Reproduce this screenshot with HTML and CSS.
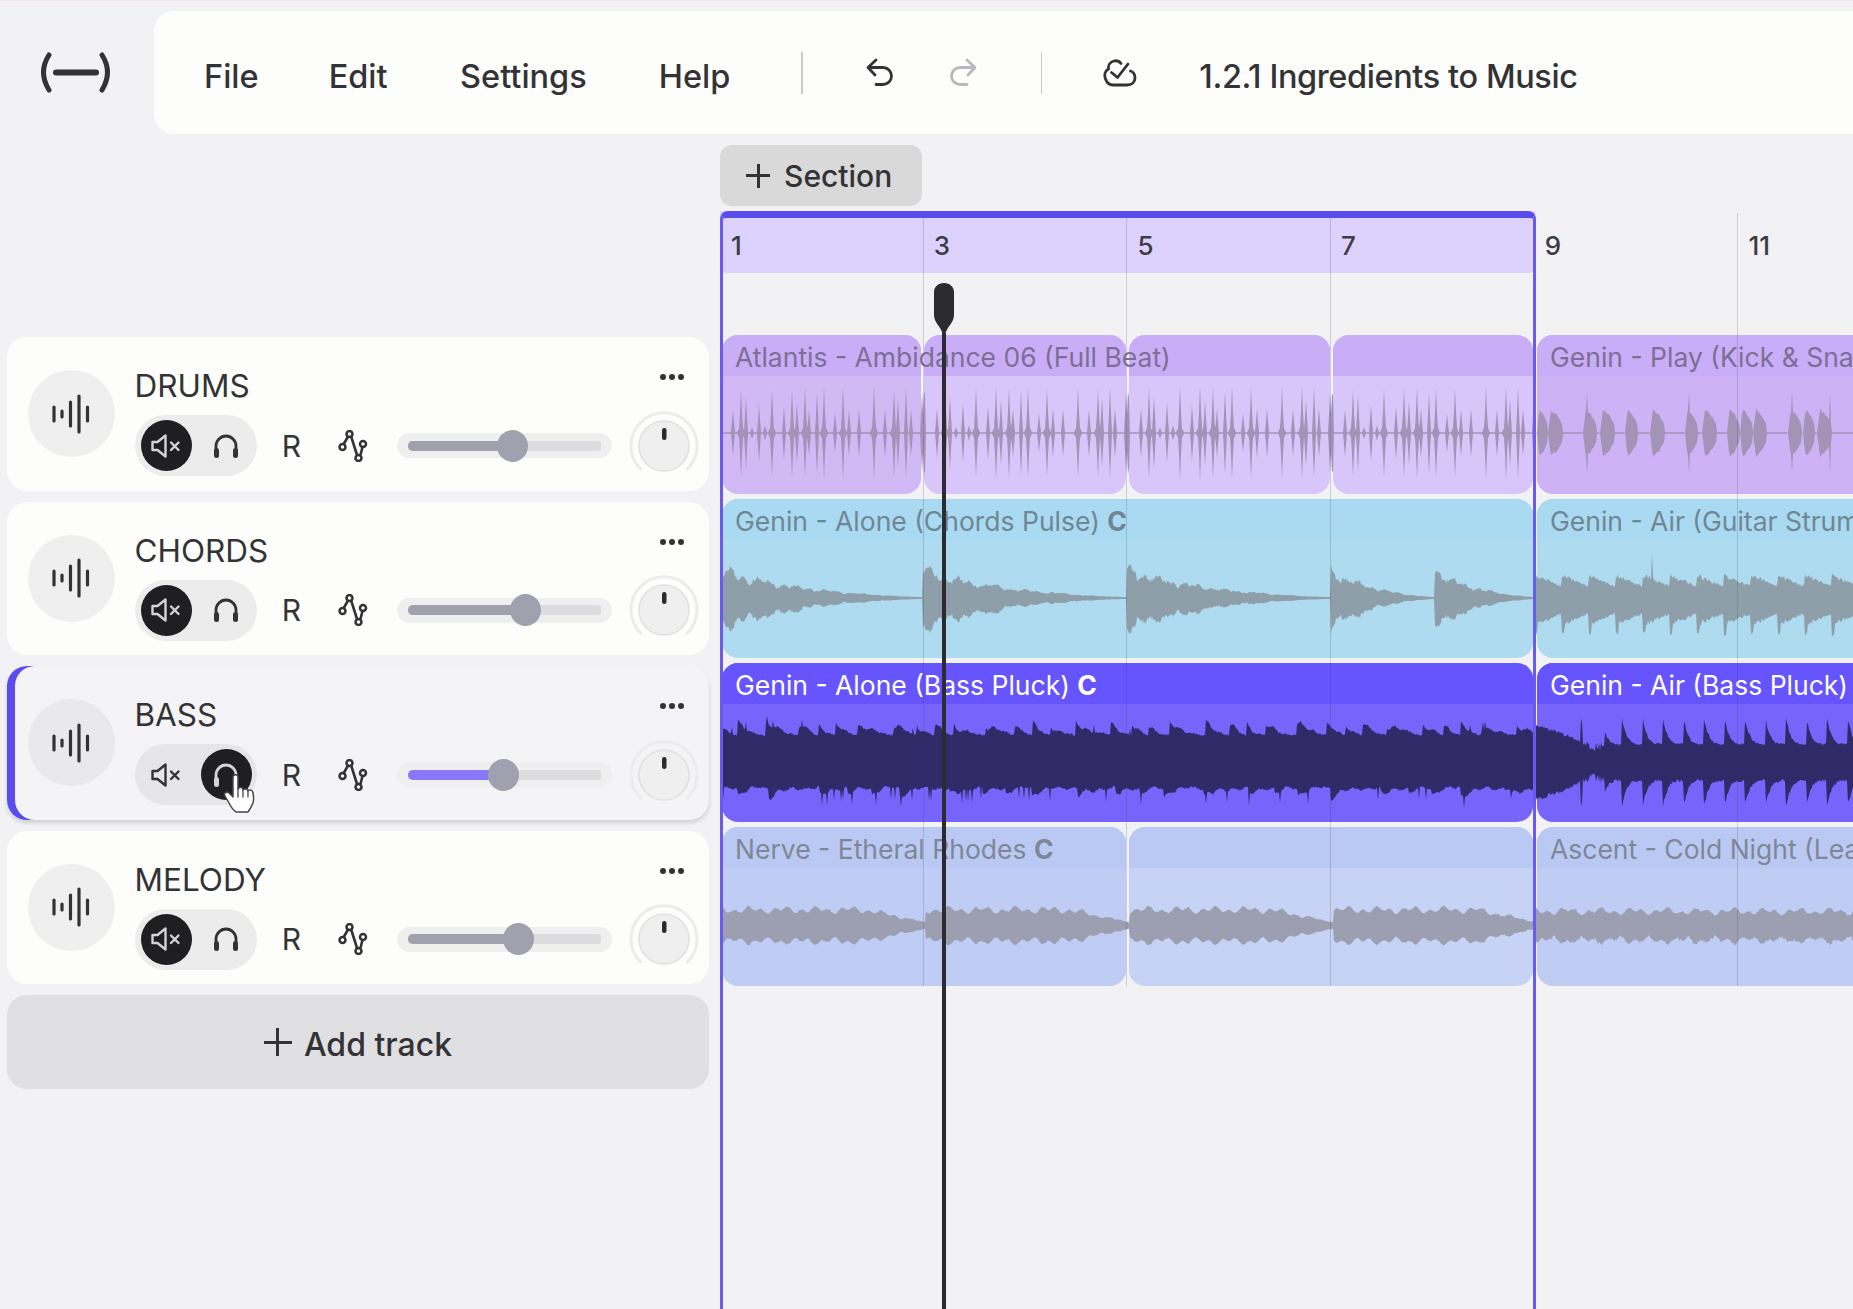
FILE: index.html
```html
<!DOCTYPE html>
<html lang="en">
<head>
    <meta charset="UTF-8">
    <meta name="viewport" content="width=device-width, initial-scale=1.0">
    <title>1.2.1 Ingredients to Music</title>
    <link rel="stylesheet" href="styles.css">
</head>
<body>
    <!-- shared icons -->
    <svg class="sprite" width="0" height="0">
        <symbol id="i-bars" viewBox="0 0 44 40">
            <path d="M5 13v14M13 17v6M21.500 8v24M30 2v36M38.500 13v14" fill="none" stroke="currentColor" stroke-width="3.200" stroke-linecap="round"/>
        </symbol>
        <symbol id="i-mute" viewBox="0 0 32 26">
            <path d="M2.500 9h5l8-6.500v21l-8-6.500h-5z" fill="none" stroke="currentColor" stroke-width="2.400" stroke-linejoin="round"/>
            <path d="M21 9.500l7.500 7.500M28.500 9.500l-7.500 7.500" fill="none" stroke="currentColor" stroke-width="2.400" stroke-linecap="round"/>
        </symbol>
        <symbol id="i-phones" viewBox="0 0 30 26">
            <path d="M5 18v-5a10 10 0 0 1 20 0v5" fill="none" stroke="currentColor" stroke-width="2.800"/>
            <rect x="3" y="15" width="5" height="10" rx="2.500" fill="currentColor"/>
            <rect x="22" y="15" width="5" height="10" rx="2.500" fill="currentColor"/>
        </symbol>
        <symbol id="i-auto" viewBox="0 0 30 32">
            <path d="M5.500 14.500l4.500-8M13 6l6 19M22.500 25l2-8" fill="none" stroke="currentColor" stroke-width="2.600"/>
            <g fill="none" stroke="currentColor" stroke-width="2.500">
                <circle cx="11.500" cy="4" r="3"/>
                <circle cx="4.500" cy="17" r="3"/>
                <circle cx="20.500" cy="28" r="3"/>
                <circle cx="25" cy="14" r="3"/>
            </g>
        </symbol>
        <symbol id="i-knob" viewBox="0 0 70 70">
            <path d="M12.500 59A33 33 0 1 1 57.500 59" fill="none" stroke="#ececec" stroke-width="3"/>
            <circle cx="35" cy="35" r="25" fill="#efefef" stroke="#e0e0e0" stroke-width="1.500"/>
            <rect x="33" y="17" width="4.500" height="12" rx="2.200" fill="#2b2b2e"/>
        </symbol>
    </svg>

    <header class="topbar">
        <div class="logo">
            <svg width="73" height="41" viewBox="0 0 73 41">
                <path d="M10 3Q-1 20 10 38M63 3Q74 20 63 38" fill="none" stroke="#333336" stroke-width="5" stroke-linecap="round"/>
                <path d="M17 20.500H57" fill="none" stroke="#333336" stroke-width="6" stroke-linecap="round"/>
            </svg>
        </div>
        <nav class="menu">
            <a class="menu-item item-file">File</a>
            <a class="menu-item item-edit">Edit</a>
            <a class="menu-item item-settings">Settings</a>
            <a class="menu-item item-help">Help</a>
            <span class="divider divider-a"></span>
            <svg class="undo" width="30" height="30" viewBox="0 0 30 30">
                <path d="M10 2L2 9.500 9 17M3 9.500H17a8.500 8.500 0 0 1 0 17H10" fill="none" stroke="#333336" stroke-width="2.800" stroke-linecap="round" stroke-linejoin="round"/>
            </svg>
            <svg class="redo" width="30" height="30" viewBox="0 0 30 30">
                <path d="M20 2L28 9.500 21 17M27 9.500H13a8.500 8.500 0 0 0 0 17H20" fill="none" stroke="#b9b9bb" stroke-width="2.800" stroke-linecap="round" stroke-linejoin="round"/>
            </svg>
            <span class="divider divider-b"></span>
            <svg class="saved" width="34" height="28" viewBox="0 0 34 28">
                <path d="M18 4.500C16 2 13 1.500 11 2 7 3 5 6.500 5.500 10 2 12 1 16 2.500 20 4 24 7 26 10 26H24C29 26 32 23 32 19 32 16 30.500 13 27.500 12" fill="none" stroke="#333336" stroke-width="2.800" stroke-linecap="round" stroke-linejoin="round"/>
                <path d="M8.500 13.500L14.500 18.500 25 5" fill="none" stroke="#333336" stroke-width="2.800" stroke-linecap="round" stroke-linejoin="round"/>
            </svg>
            <span class="menu-item song-title">1.2.1 Ingredients to Music</span>
        </nav>
    </header>

    <main class="main">
        <section class="tracks">
            <div class="track">
                <div class="track-icon"><svg width="44" height="40"><use href="#i-bars"/></svg></div>
                <div class="track-body">
                    <div class="track-head"><span class="track-name">DRUMS</span><span class="dots"><i></i><i></i><i></i></span></div>
                    <div class="controls">
                        <div class="toggle">
                            <span class="toggle-btn on"><svg width="32" height="26"><use href="#i-mute"/></svg></span>
                            <span class="toggle-btn"><svg width="30" height="26"><use href="#i-phones"/></svg></span>
                        </div>
                        <span class="rec">R</span>
                        <svg class="auto" width="30" height="32"><use href="#i-auto"/></svg>
                        <div class="slider"><div class="slider-track"><div class="slider-fill" style="width: 105px"></div></div></div>
                        <svg class="knob" width="70" height="70"><use href="#i-knob"/></svg>
                    </div>
                </div>
            </div>

            <div class="track">
                <div class="track-icon"><svg width="44" height="40"><use href="#i-bars"/></svg></div>
                <div class="track-body">
                    <div class="track-head"><span class="track-name">CHORDS</span><span class="dots"><i></i><i></i><i></i></span></div>
                    <div class="controls">
                        <div class="toggle">
                            <span class="toggle-btn on"><svg width="32" height="26"><use href="#i-mute"/></svg></span>
                            <span class="toggle-btn"><svg width="30" height="26"><use href="#i-phones"/></svg></span>
                        </div>
                        <span class="rec">R</span>
                        <svg class="auto" width="30" height="32"><use href="#i-auto"/></svg>
                        <div class="slider"><div class="slider-track"><div class="slider-fill" style="width: 118px"></div></div></div>
                        <svg class="knob" width="70" height="70"><use href="#i-knob"/></svg>
                    </div>
                </div>
            </div>

            <div class="track track-active">
                <div class="track-icon"><svg width="44" height="40"><use href="#i-bars"/></svg></div>
                <div class="track-body">
                    <div class="track-head"><span class="track-name">BASS</span><span class="dots"><i></i><i></i><i></i></span></div>
                    <div class="controls">
                        <div class="toggle">
                            <span class="toggle-btn"><svg width="32" height="26"><use href="#i-mute"/></svg></span>
                            <span class="toggle-btn on"><svg width="30" height="26"><use href="#i-phones"/></svg></span>
                            <!-- mouse pointer -->
                            <svg class="pointer" width="34" height="40" viewBox="0 0 34 40">
                                <path d="M10 3c0-3 5-3 5 0v12c1-2 5-2 5 1 1-2 5-1 5 1 1-2 5-1 5 2 1 5 1 9-1 12-1 3-3 5-4 7H13c-3-2-5-5-7-9l-4-7c-2-3 2-5 4-3l4 4z" fill="#fff" stroke="#46464a" stroke-width="1.500" stroke-linejoin="round"/>
                                <path d="M15 15v8M20 16v7M25 17v6" fill="none" stroke="#46464a" stroke-width="1.300" stroke-linecap="round"/>
                            </svg>
                        </div>
                        <span class="rec">R</span>
                        <svg class="auto" width="30" height="32"><use href="#i-auto"/></svg>
                        <div class="slider"><div class="slider-track"><div class="slider-fill fill-active" style="width: 96px"></div></div></div>
                        <svg class="knob" width="70" height="70"><use href="#i-knob"/></svg>
                    </div>
                </div>
            </div>

            <div class="track">
                <div class="track-icon"><svg width="44" height="40"><use href="#i-bars"/></svg></div>
                <div class="track-body">
                    <div class="track-head"><span class="track-name">MELODY</span><span class="dots"><i></i><i></i><i></i></span></div>
                    <div class="controls">
                        <div class="toggle">
                            <span class="toggle-btn on"><svg width="32" height="26"><use href="#i-mute"/></svg></span>
                            <span class="toggle-btn"><svg width="30" height="26"><use href="#i-phones"/></svg></span>
                        </div>
                        <span class="rec">R</span>
                        <svg class="auto" width="30" height="32"><use href="#i-auto"/></svg>
                        <div class="slider"><div class="slider-track"><div class="slider-fill" style="width: 111px"></div></div></div>
                        <svg class="knob" width="70" height="70"><use href="#i-knob"/></svg>
                    </div>
                </div>
            </div>

            <button class="add-track"><span class="plus plus-big"></span>Add track</button>
        </section>

        <section class="timeline">
            <button class="add-section"><span class="plus"></span>Section</button>

            <div class="arrange">
                <div class="ruler"></div>

                <div class="lanes">
                    <div class="lane lane-drums">
                        <div class="clip clip-a seam" style="width: 199px"><div class="clip-head">Atlantis - Ambidance 06 (Full Beat)</div></div>
                        <div class="clip" style="width: 202px"><div class="clip-head"></div></div>
                        <div class="clip" style="width: 201px"><div class="clip-head"></div></div>
                        <div class="clip" style="width: 200px"><div class="clip-head"></div></div>
                        <div class="clip clip-out" style="width: 400px"><div class="clip-head">Genin - Play (Kick &amp; Snare)</div></div>
                        <svg class="wave" data-kind="drums"></svg>
                    </div>
                    <div class="lane lane-chords">
                        <div class="clip" style="width: 811px"><div class="clip-head">Genin - Alone (Chords Pulse) <b>C</b></div></div>
                        <div class="clip" style="width: 400px"><div class="clip-head">Genin - Air (Guitar Strum)</div></div>
                        <svg class="wave" data-kind="chords"></svg>
                    </div>
                    <div class="lane lane-bass">
                        <div class="clip" style="width: 811px"><div class="clip-head">Genin - Alone (Bass Pluck) <b>C</b></div></div>
                        <div class="clip" style="width: 400px"><div class="clip-head">Genin - Air (Bass Pluck) <b>C</b></div></div>
                        <svg class="wave" data-kind="bass"></svg>
                    </div>
                    <div class="lane lane-melody">
                        <div class="clip clip-a" style="width: 404px"><div class="clip-head">Nerve - Etheral Rhodes <b>C</b></div></div>
                        <div class="clip seam-left" style="width: 404px"><div class="clip-head"></div></div>
                        <div class="clip clip-out" style="width: 400px"><div class="clip-head">Ascent - Cold Night (Lead)</div></div>
                        <svg class="wave" data-kind="melody"></svg>
                    </div>
                </div>

                <!-- overlays: bar lines, loop range, playhead -->
                <div class="beats">
                    <span class="beat">1</span>
                    <span class="beat">3</span>
                    <span class="beat">5</span>
                    <span class="beat">7</span>
                    <span class="beat">9</span>
                    <span class="beat">11</span>
                </div>
                <div class="loop"></div>
                <div class="playhead">
                    <svg width="22" height="52" viewBox="0 0 22 52">
                        <path d="M11 0C17 0 21 4 21 9V32C21 40 14 43 12 52H10C8 43 1 40 1 32V9C1 4 5 0 11 0Z" fill="#2b2b30"/>
                    </svg>
                </div>
            </div>
        </section>
    </main>

    <script src="waves.js"></script>
</body>
</html>
```

FILE: styles.css
```css
* {
    margin: 0;
    padding: 0;
    box-sizing: border-box;
}

body {
    height: 1309px;
    overflow: hidden;
    background: #f2f2f5;
    border-top: 1px solid #f3e6ea;
    color: #333336;
    font-family: Inter, "Liberation Sans", sans-serif;
}

.sprite {
    position: absolute;
}

/* top bar */
.topbar {
    display: flex;
    height: 133px;
    padding-top: 10px;
}
.logo {
    width: 154px;
    flex: none;
    padding: 41px 0 0 39px;
}
.menu {
    flex: 1;
    height: 123px;
    display: flex;
    align-items: center;
    background: #fdfdfc;
    border-radius: 20px 0 0 20px;
    font-size: 32.500px;
    font-weight: 500;
    white-space: nowrap;
}
.menu-item {
    flex: none;
    padding-top: 7px;
}
.item-file { margin-left: 50px; }
.item-edit { margin-left: 70px; }
.item-settings { margin-left: 72.500px; }
.item-help { margin-left: 72px; }
.divider {
    width: 1.500px;
    height: 42px;
    background: #c9c9cb;
}
.divider-a { margin-left: 71px; }
.undo { margin-left: 63px; }
.redo { margin-left: 51px; }
.divider-b { margin-left: 64px; }
.saved { margin-left: 61px; }
.song-title { margin-left: 62px; letter-spacing: -0.4px; }

/* main area */
.main {
    display: flex;
    padding: 11px 0 0 7px;
}

/* track list */
.tracks {
    width: 702px;
    flex: none;
    padding-top: 192px;
    display: flex;
    flex-direction: column;
    gap: 11px;
}
.track {
    height: 153.500px;
    display: flex;
    align-items: center;
    gap: 20px;
    padding-left: 20.500px;
    background: #fdfdfc;
    border-radius: 20px;
}
.track-active {
    background: #f4f4f7;
    box-shadow: inset 8px 0 0 #5b4cf0, 0 3px 4px rgba(0,0,0,0.14);
}
.track-icon {
    width: 87px;
    height: 87px;
    flex: none;
    display: flex;
    align-items: center;
    justify-content: center;
    background: #efefef;
    border-radius: 50%;
    color: #333336;
}
.track-active .track-icon {
    background: #e9e9eb;
}
.track-body {
    height: 100%;
    padding-top: 31px;
}
.track-head {
    width: 549px;
    height: 36px;
    margin-bottom: 11px;
    display: flex;
    justify-content: space-between;
}
.track-name {
    font-size: 31.500px;
    line-height: 36px;
}
.dots {
    display: flex;
    gap: 3px;
    margin-top: 6px;
}
.dots i {
    width: 6px;
    height: 6px;
    border-radius: 50%;
    background: #333336;
}

/* track controls */
.controls {
    display: flex;
    align-items: center;
    height: 61px;
}
.toggle {
    position: relative;
    width: 122px;
    height: 61px;
    flex: none;
    display: flex;
    align-items: center;
    gap: 9px;
    padding-left: 6px;
    background: #ececec;
    border-radius: 31px;
}
.track-active .toggle {
    background: #e6e6e8;
}
.toggle-btn {
    width: 51px;
    height: 51px;
    display: flex;
    align-items: center;
    justify-content: center;
    border-radius: 50%;
    color: #333336;
}
.toggle-btn.on {
    background: #1f1f22;
    color: #d4d4d6;
}
.pointer {
    position: absolute;
    left: 88px;
    top: 30px;
}
.rec {
    width: 22px;
    margin-left: 24px;
    font-size: 30px;
    text-align: center;
}
.auto {
    margin-left: 35px;
    flex: none;
    color: #333336;
}
.slider {
    width: 215px;
    height: 25px;
    margin-left: 29px;
    padding: 7.500px 11px;
    flex: none;
    background: #efefef;
    border-radius: 13px;
}
.slider-track {
    height: 10px;
    background: #dcdcdf;
    border-radius: 3px;
}
.slider-fill {
    position: relative;
    height: 10px;
    background: #a0a0ae;
    border-radius: 5px 0 0 5px;
}
.slider-fill::after {
    content: "";
    position: absolute;
    right: -15px;
    top: -11px;
    width: 31px;
    height: 32px;
    background: #a0a0ae;
    border-radius: 50%;
}
.fill-active {
    background: #8a78fb;
}
.knob {
    margin-left: 17px;
    flex: none;
}

.add-track {
    height: 94px;
    display: flex;
    align-items: center;
    justify-content: center;
    gap: 12px;
    padding-top: 4px;
    border: none;
    border-radius: 20px;
    background: #e0e0e2;
    color: #333336;
    font: 500 32px Inter, "Liberation Sans", sans-serif;
}
.plus {
    display: block;
    width: 24px;
    height: 24px;
    background:
        linear-gradient(#333336, #333336) center / 100% 3px no-repeat,
        linear-gradient(#333336, #333336) center / 3px 100% no-repeat;
}
.plus-big {
    width: 28px;
    height: 28px;
    margin-top: -4px;
}

/* timeline */
.timeline {
    flex: 1;
    min-width: 0;
    margin-left: 11px;
}
.add-section {
    width: 202px;
    height: 61px;
    margin-bottom: 5px;
    display: flex;
    align-items: center;
    gap: 14px;
    padding-left: 26px;
    border: none;
    border-radius: 12px;
    background: #d9d9d9;
    color: #333336;
    font: 500 30px Inter, "Liberation Sans", sans-serif;
}
.arrange {
    position: relative;
    height: 1098px;
}
.ruler {
    width: 815px;
    height: 62px;
    background: #ddd2fd;
    border-radius: 0 0 6px 6px;
}
.lanes {
    margin-top: 62px;
    display: flex;
    flex-direction: column;
    gap: 5px;
}
.lane {
    position: relative;
    height: 159px;
    display: flex;
    gap: 3px;
    padding-left: 2px;
}
.clip {
    flex: none;
    border-radius: 16px;
    background: var(--body);
}
.clip:last-of-type {
    margin-left: 1px;
}
.clip-head {
    height: 41px;
    padding-left: 13px;
    border-radius: 16px 16px 0 0;
    background: var(--head);
    color: var(--title);
    font-size: 26.500px;
    line-height: 45px;
    white-space: nowrap;
}
.clip-head b {
    font-weight: 700;
}
.wave {
    position: absolute;
    left: 0;
    top: 0;
    width: 100%;
    height: 100%;
}

.lane-drums { --head: #c9aef7; --body: #d8c5f9; --title: #7d6f93; }
.lane-drums .clip-a { --body: #d1b9f6; }
.lane-drums .clip-out { --head: #c8adf8; --body: #cdb2f6; }
.lane-chords { --head: #a9daf2; --body: #afdbf1; --title: #6f8794; }
.lane-bass { --head: #6654ff; --body: #7664fb; --title: #fff; }
.lane-melody { --head: #b9c9f4; --body: #c6d3f5; --title: #7f8796; }
.lane-melody .clip-a,
.lane-melody .clip-out { --body: #bfcdf5; }

/* dashed white joins between two regions */
.seam,
.seam-left {
    position: relative;
}
.seam::after,
.seam-left::after {
    content: "";
    position: absolute;
    top: 41px;
    bottom: 22px;
    border-left: 2px dashed #f4f2fb;
}
.seam::after { right: -2px; }
.seam-left::after { left: -3px; }

/* overlays */
.beats {
    position: absolute;
    left: 0;
    top: 2px;
    height: 773px;
    display: flex;
}
.beat {
    width: 203.700px;
    flex: none;
    padding: 17px 0 0 11px;
    border-right: 1.500px solid rgba(60,60,70,0.2);
    font-size: 26px;
    font-weight: 500;
    line-height: 32px;
    color: #3c3c44;
}
.beat:nth-child(n+2) {
    padding-left: 10px;
}
.loop {
    position: absolute;
    left: 0;
    top: 0;
    bottom: 0;
    width: 816px;
    border: 3px solid #6a5af0;
    border-top: 7px solid #5b4cf0;
    border-bottom: none;
    border-radius: 8px 8px 0 0;
}
.playhead {
    position: absolute;
    left: 213px;
    top: 72px;
    bottom: 0;
    width: 22px;
}
.playhead svg {
    display: block;
}
.playhead::after {
    content: "";
    position: absolute;
    left: 9.250px;
    top: 50px;
    bottom: 0;
    width: 3.500px;
    background: #2b2b30;
}
```

FILE: waves.js
```js
// Draws the audio waveforms for each lane. x is in px from the left of the arrange area.
const LOOP_END = 815;
const BAR = 204;

function makeRandom(seed) {
    return () => (seed = (seed * 16807) % 2147483647) / 2147483647;
}

// soft lumps so the outline isn't plain noise
function lumps(x, seed) {
    return 0.5 + 0.25 * Math.sin(x * 0.47 + seed) + 0.25 * Math.sin(x * 0.19 + seed * 2);
}

// [position in the two bar pattern, height]
const DRUM_HITS = [[11,25],[19,46],[24,38],[30,6],[37,30],[43,8],[50,47],[62,28],[70,47],[75,33],[83,47],[87,25],[95,42],[102,47],[113,20],[121,47],[127,25],[137,25],[152,47],[163,25],[172,47],[176,35],[184,47],[189,25],[200,42],[202,42],[203,38]];
const DRUM_BLOBS = [19, 50, 70, 83, 102, 121, 152, 172, 202];
// kick and snare after the loop: [start, end, spike position]
const KICK_PARTS = [[817,828],[828,843],[863,877,867],[880,895],[905,918],[930,945],[965,978,969],[982,997],[1007,1020],[1020,1033],[1033,1047],[1068,1082,1072],[1083,1095],[1097,1112,1110]];

function drumsEnv(x, rand) {
    if (x < LOOP_END) {
        const t = (x - 2) % BAR;
        let a = 0.8;
        for (const p of DRUM_BLOBS) {
            const d = Math.abs(t - p);
            if (d < 4) a = Math.max(a, (10 - d * 2.4) * (0.8 + rand() * 0.3));
        }
        for (const [p, h] of DRUM_HITS) {
            const d = Math.abs(t - p);
            if (d === 0) a = Math.max(a, h * (0.92 + rand() * 0.08));
            else if (d === 1) a = Math.max(a, h * 0.45);
        }
        return [a, a];
    }
    let a = 0.8;
    for (const [s, e, spike] of KICK_PARTS) {
        if (x >= s && x < e) {
            const t = (x - s) / (e - s);
            a = 25 * Math.min(1, t * 5) * (1 - t * t * 0.7) * (0.88 + rand() * 0.12);
        }
        if (spike !== undefined && Math.abs(x - spike) < 1) a = 40;
    }
    return [a, a];
}

function chordsEnv(x, rand) {
    const starts = [2, 203, 407, 611, 715];
    if (x < LOOP_END) {
        let s = 2, e = LOOP_END;
        for (let i = 0; i < starts.length; i++) {
            if (x >= starts[i]) { s = starts[i]; e = starts[i + 1] || LOOP_END; }
        }
        const t = (x - s) / (e - s);
        const body = Math.pow(1 - t, 1.5) * 19 + Math.exp(-t * 7) * 10;
        const a = 1 + body * (0.55 + lumps(x, 3) * 0.5 + rand() * 0.25);
        return [a, a + (t < 0.4 ? 2 : 0)];
    }
    const t = (x - LOOP_END) % 27 / 27;
    const a = 10 + 13 * (1 - t) * (0.7 + rand() * 0.3) + rand() * 3;
    const big = Math.abs(x - 932) < 1 ? 26 : 0;
    return [a + big, a + 4 + (t < 0.1 ? 10 : 0)];
}

function bassEnv(x, rand) {
    if (x < LOOP_END) {
        // the teeth drift a little so they don't line up like a saw
        const t = ((x + 7 * Math.sin(x * 0.06)) % 24) / 24;
        const up = 25 + 12 * Math.pow(1 - t, 1.6) * (0.45 + lumps(x, 5) * 0.9) + rand() * 2 + (rand() > 0.98 ? 7 : 0);
        const t2 = ((x + 9 + 10 * Math.sin(x * 0.045)) % 33) / 33;
        const down = 24 + 8 * Math.pow(1 - t2, 3) * (0.5 + lumps(x, 9)) + lumps(x, 2) * 4 + rand() * 2 + (rand() > 0.96 ? 12 : 0);
        return [up, down];
    }
    const t = (x % 20.5) / 20.5;
    let a = 16 + 28 * Math.pow(1 - t, 4) * (0.8 + rand() * 0.2);
    if (x < 860) a = 34 - (x - 815) * 0.35 + rand() * 3;
    if (x > 862 && x < 885) a = 9 + rand() * 10;
    return [a + rand() * 2, a + 2 + rand() * 3];
}

function melodyEnv(x, rand) {
    if (x < LOOP_END) {
        const t = ((x - 2) % BAR) / BAR;
        const fade = t < 0.7 ? 1 : Math.max(0.06, 1 - (t - 0.7) * 3.2);
        const a = 1.5 + (9 + 8 * lumps(x, 1)) * fade + rand() * 1.2;
        return [a, a + 1];
    }
    const a = 9 + 8 * lumps(x, 2) + rand() * 1.5;
    return [a, a + rand() * 3];
}

const KINDS = {
    drums:  { env: drumsEnv,  center: 98, color: "#a393b6", seed: 11 },
    chords: { env: chordsEnv, center: 99, color: "#8e9fa9", seed: 23 },
    bass:   { env: bassEnv,   center: 98, color: "#302a68", seed: 37 },
    melody: { env: melodyEnv, center: 98, color: "#9c9fb0", seed: 53 }
};

document.querySelectorAll(".wave").forEach(svg => {
    const kind = KINDS[svg.dataset.kind];
    const rand = makeRandom(kind.seed);
    const top = [];
    const bottom = [];
    for (let x = 3; x < 1134; x++) {
        const [up, down] = kind.env(x, rand);
        top.push(x + " " + (kind.center - up).toFixed(1));
        bottom.unshift(x + " " + (kind.center + down).toFixed(1));
    }
    const path = document.createElementNS("http://www.w3.org/2000/svg", "path");
    path.setAttribute("d", "M" + top.join("L") + "L" + bottom.join("L") + "Z");
    path.setAttribute("fill", kind.color);
    svg.appendChild(path);
});
```
